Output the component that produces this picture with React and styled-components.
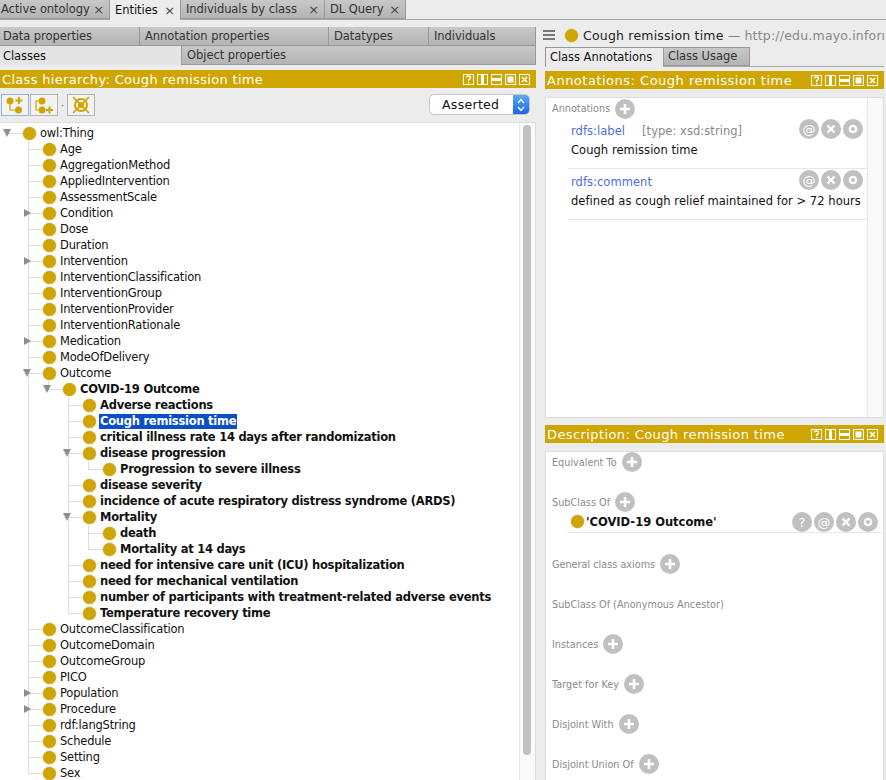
import React from "react";
import styled, { createGlobalStyle } from "styled-components";

const GOLD = "#cfa600";
const FONT = `"DejaVu Sans", "Liberation Sans", sans-serif`;

const topTabs = [
  { label: "Active ontology", width: 110 },
  { label: "Entities", width: 71, active: true },
  { label: "Individuals by class", width: 144 },
  { label: "DL Query", width: 81 },
];

const tree = {
  name: "owl:Thing",
  open: true,
  kids: [
    { name: "Age" },
    { name: "AggregationMethod" },
    { name: "AppliedIntervention" },
    { name: "AssessmentScale" },
    { name: "Condition", closed: true },
    { name: "Dose" },
    { name: "Duration" },
    { name: "Intervention", closed: true },
    { name: "InterventionClassification" },
    { name: "InterventionGroup" },
    { name: "InterventionProvider" },
    { name: "InterventionRationale" },
    { name: "Medication", closed: true },
    { name: "ModeOfDelivery" },
    {
      name: "Outcome",
      open: true,
      kids: [
        {
          name: "COVID-19 Outcome",
          bold: true,
          open: true,
          kids: [
            { name: "Adverse reactions", bold: true },
            { name: "Cough remission time", bold: true, selected: true },
            { name: "critical illness rate 14 days after randomization", bold: true },
            {
              name: "disease progression",
              bold: true,
              open: true,
              kids: [{ name: "Progression to severe illness", bold: true }],
            },
            { name: "disease severity", bold: true },
            { name: "incidence of acute respiratory distress syndrome (ARDS)", bold: true },
            {
              name: "Mortality",
              bold: true,
              open: true,
              kids: [
                { name: "death", bold: true },
                { name: "Mortality at 14 days", bold: true },
              ],
            },
            { name: "need for intensive care unit (ICU) hospitalization", bold: true },
            { name: "need for mechanical ventilation", bold: true },
            { name: "number of participants with treatment-related adverse events", bold: true },
            { name: "Temperature recovery time", bold: true },
          ],
        },
      ],
    },
    { name: "OutcomeClassification" },
    { name: "OutcomeDomain" },
    { name: "OutcomeGroup" },
    { name: "PICO" },
    { name: "Population", closed: true },
    { name: "Procedure", closed: true },
    { name: "rdf:langString" },
    { name: "Schedule" },
    { name: "Setting" },
    { name: "Sex" },
  ],
};

const GlobalStyle = createGlobalStyle`
  html, body {
    margin: 0;
    padding: 0;
    background: #ececec;
    overflow: hidden;
  }
`;

function PaneControls() {
  return (
    <Controls>
      <Ctl viewBox="0 0 11 11">
        <rect x="0.5" y="0.5" width="10" height="10" fill="none" stroke="#fff" />
        <path d="M3.5 3.5 Q3.5 2 5.5 2 Q7.5 2 7.5 3.7 Q7.5 4.8 5.6 5.6 V7" fill="none" stroke="#fff" strokeWidth="1.3" />
        <rect x="5" y="8" width="1.4" height="1.4" fill="#fff" />
      </Ctl>
      <Ctl viewBox="0 0 11 11">
        <rect x="0.5" y="0.5" width="10" height="10" fill="none" stroke="#fff" />
        <rect x="4" y="0" width="3" height="11" fill="#fff" />
      </Ctl>
      <Ctl viewBox="0 0 11 11">
        <rect x="0.5" y="0.5" width="10" height="10" fill="none" stroke="#fff" />
        <rect x="0" y="4" width="11" height="3" fill="#fff" />
      </Ctl>
      <Ctl viewBox="0 0 11 11">
        <rect x="0.5" y="0.5" width="10" height="10" fill="none" stroke="#fff" />
        <rect x="2.5" y="2.5" width="6" height="6" fill="#fff" />
      </Ctl>
      <Ctl viewBox="0 0 11 11">
        <rect x="0.5" y="0.5" width="10" height="10" fill="none" stroke="#fff" />
        <path d="M3 3 L8 8 M8 3 L3 8" stroke="#fff" strokeWidth="1.6" />
      </Ctl>
    </Controls>
  );
}

function PlusButton() {
  return (
    <Round>
      <svg width="12" height="12" viewBox="0 0 12 12">
        <path d="M6 1 V11 M1 6 H11" stroke="#fff" strokeWidth="2.6" />
      </svg>
    </Round>
  );
}

function RowActions({ help }) {
  return (
    <Actions>
      {help && <Round>?</Round>}
      <Round>@</Round>
      <Round>
        <svg width="10" height="10" viewBox="0 0 10 10">
          <path d="M1.5 1.5 L8.5 8.5 M8.5 1.5 L1.5 8.5" stroke="#fff" strokeWidth="2.4" />
        </svg>
      </Round>
      <Round>
        <svg width="10" height="10" viewBox="0 0 10 10">
          <circle cx="5" cy="5" r="3.2" fill="none" stroke="#fff" strokeWidth="2.2" />
        </svg>
      </Round>
    </Actions>
  );
}

function TreeItem({ node }) {
  return (
    <Item>
      <Row>
        {node.open && <Toggle $open />}
        {node.closed && <Toggle />}
        <Dash />
        <Ball />
        <Name $bold={node.bold} $selected={node.selected}>
          {node.name}
        </Name>
      </Row>
      {node.kids && (
        <Kids>
          {node.kids.map((k) => (
            <TreeItem key={k.name} node={k} />
          ))}
        </Kids>
      )}
    </Item>
  );
}

export default function App() {
  return (
    <>
      <GlobalStyle />
      <Page>
        <TopBar>
          {topTabs.map((t) => (
            <TopTab key={t.label} $w={t.width} $active={t.active}>
              <span>{t.label}</span>
              <Close>×</Close>
            </TopTab>
          ))}
        </TopBar>
        <Main>
          <Left>
            <SubRow>
              <SubTab $w={140}>Data properties</SubTab>
              <SubTab $w={189}>Annotation properties</SubTab>
              <SubTab $w={100}>Datatypes</SubTab>
              <SubTab $w={107}>Individuals</SubTab>
            </SubRow>
            <SubRow>
              <SubTab $w={182} $active>
                Classes
              </SubTab>
              <SubTab $w={354}>Object properties</SubTab>
            </SubRow>
            <Header $spacing={0.32}>
              <span>Class hierarchy: Cough remission time</span>
              <PaneControls />
            </Header>
            <Toolbar>
              <ToolButton $focus>
                <svg width="20" height="18" viewBox="0 0 20 18">
                  <circle cx="5" cy="5" r="3.5" fill={GOLD} />
                  <circle cx="13.5" cy="14" r="3.5" fill={GOLD} />
                  <path d="M5 8 V14 H10" fill="none" stroke={GOLD} strokeWidth="1.2" />
                  <path d="M14 1 V8 M10.5 4.5 H17.5" stroke={GOLD} strokeWidth="2" />
                </svg>
              </ToolButton>
              <ToolButton>
                <svg width="20" height="18" viewBox="0 0 20 18">
                  <circle cx="8" cy="5" r="3.5" fill={GOLD} />
                  <circle cx="8" cy="14" r="3.5" fill={GOLD} />
                  <path d="M4.5 5 H2 V14 H4.5" fill="none" stroke={GOLD} strokeWidth="1.2" />
                  <path d="M15.5 10.5 V17.5 M12 14 H19" stroke={GOLD} strokeWidth="2" />
                </svg>
              </ToolButton>
              <Dot>·</Dot>
              <ToolButton>
                <svg width="20" height="18" viewBox="0 0 20 18">
                  <circle cx="10" cy="9" r="6" fill="none" stroke={GOLD} strokeWidth="2" />
                  <circle cx="10" cy="9" r="3" fill={GOLD} />
                  <path d="M2 1 L18 17 M18 1 L2 17" stroke={GOLD} strokeWidth="1.6" />
                </svg>
              </ToolButton>
              <Select>
                <SelectText>Asserted</SelectText>
                <Stepper>
                  <svg width="8" height="16" viewBox="0 0 8 16">
                    <path d="M1 6 L4 2.5 L7 6 M1 10 L4 13.5 L7 10" fill="none" stroke="#fff" strokeWidth="1.4" />
                  </svg>
                </Stepper>
              </Select>
            </Toolbar>
            <TreeBox>
              <TreeScroll>
                <Root>
                  <TreeItem node={tree} />
                </Root>
              </TreeScroll>
              <Track>
                <Thumb />
              </Track>
            </TreeBox>
          </Left>
          <Right>
            <EntityBar>
              <Burger>
                <i />
                <i />
                <i />
              </Burger>
              <Ball />
              <EntityName>Cough remission time</EntityName>
              <EntityIri>— http://edu.mayo.informatics.owl</EntityIri>
            </EntityBar>
            <RightTabs>
              <RightTab $active>Class Annotations</RightTab>
              <RightTab>Class Usage</RightTab>
            </RightTabs>
            <Header $top={4} $spacing={0.5}>
              <span>Annotations: Cough remission time</span>
              <PaneControls />
            </Header>
            <AnnotationBox>
              <AnnotationList>
                <SectionLabel>
                  <Caption>Annotations</Caption>
                  <PlusButton />
                </SectionLabel>
                <Annotation>
                  <PropLine>
                    <Prop>rdfs:label</Prop>
                    <PropType>[type: xsd:string]</PropType>
                  </PropLine>
                  <RowActions />
                  <Value>Cough remission time</Value>
                </Annotation>
                <Annotation>
                  <PropLine>
                    <Prop>rdfs:comment</Prop>
                  </PropLine>
                  <RowActions />
                  <Value>defined as cough relief maintained for &gt; 72 hours</Value>
                </Annotation>
              </AnnotationList>
              <SideTrack />
            </AnnotationBox>
            <Header $top={7} $spacing={0.4}>
              <span>Description: Cough remission time</span>
              <PaneControls />
            </Header>
            <DescriptionBox>
              <Section>
                <Caption>Equivalent To</Caption>
                <PlusButton />
              </Section>
              <Section $short>
                <Caption>SubClass Of</Caption>
                <PlusButton />
              </Section>
              <Frame>
                <Ball />
                <FrameName>'COVID-19 Outcome'</FrameName>
                <RowActions help />
              </Frame>
              <Section>
                <Caption>General class axioms</Caption>
                <PlusButton />
              </Section>
              <Section>
                <Caption>SubClass Of (Anonymous Ancestor)</Caption>
              </Section>
              <Section>
                <Caption>Instances</Caption>
                <PlusButton />
              </Section>
              <Section>
                <Caption>Target for Key</Caption>
                <PlusButton />
              </Section>
              <Section>
                <Caption>Disjoint With</Caption>
                <PlusButton />
              </Section>
              <Section>
                <Caption>Disjoint Union Of</Caption>
                <PlusButton />
              </Section>
            </DescriptionBox>
          </Right>
        </Main>
      </Page>
    </>
  );
}

const Page = styled.div`
  width: 886px;
  height: 780px;
  overflow: hidden;
  background: #ececec;
  font-family: ${FONT};
  font-size: 11.5px;
  color: #111;
`;

const TopBar = styled.div`
  height: 19px;
  display: flex;
  border-bottom: 1px solid #a8a8a8;
`;

const TopTab = styled.div`
  width: ${(p) => p.$w}px;
  height: ${(p) => (p.$active ? 20 : 19)}px;
  box-sizing: border-box;
  flex: none;
  display: flex;
  align-items: center;
  justify-content: space-between;
  padding: 0 5px 0 5px;
  font-size: 11.5px;
  letter-spacing: -0.05px;
  white-space: nowrap;
  color: ${(p) => (p.$active ? "#111" : "#333")};
  background: ${(p) =>
    p.$active ? "#ececec" : "linear-gradient(#c8c8c8, #b4b4b4)"};
  border-right: 1px solid #999;
  border-bottom: ${(p) => (p.$active ? "none" : "1px solid #999")};
  &:first-child {
    padding-left: 1px;
  }
`;

const Close = styled.span`
  font-size: 13px;
  color: #444;
`;

const Main = styled.div`
  display: flex;
  gap: 9px;
  padding-top: 7px;
`;

const Left = styled.div`
  width: 536px;
  flex: none;
  display: flex;
  flex-direction: column;
`;

const SubRow = styled.div`
  display: flex;
  height: 19px;
`;

const SubTab = styled.div`
  width: ${(p) => p.$w}px;
  box-sizing: border-box;
  padding: 0 4px 0 5px;
  display: flex;
  align-items: center;
  font-size: 11.5px;
  letter-spacing: -0.05px;
  color: ${(p) => (p.$active ? "#111" : "#333")};
  background: ${(p) =>
    p.$active ? "#e4e4e4" : "linear-gradient(#c8c8c8, #b4b4b4)"};
  border-right: 1px solid #999;
  border-bottom: ${(p) => (p.$active ? "none" : "1px solid #999")};
  &:first-child {
    padding-left: 3px;
  }
`;

const Header = styled.div`
  height: 18px;
  flex: none;
  margin-top: ${(p) => p.$top ?? 5}px;
  display: flex;
  align-items: center;
  justify-content: space-between;
  padding: 0 6px 0 2px;
  background: ${GOLD};
  color: #fff;
  font-size: 13px;
  letter-spacing: ${(p) => p.$spacing}px;
  white-space: nowrap;
`;

const Controls = styled.div`
  display: flex;
  gap: 3px;
`;

const Ctl = styled.svg`
  width: 11px;
  height: 11px;
  display: block;
`;

const Toolbar = styled.div`
  height: 34px;
  display: flex;
  align-items: center;
  padding: 0 6px 0 1px;
  gap: 1px;
  box-sizing: border-box;
`;

const ToolButton = styled.div`
  width: 28px;
  height: 22px;
  box-sizing: border-box;
  display: flex;
  align-items: center;
  justify-content: center;
  background: #f3f3f3;
  border: 1px solid ${(p) => (p.$focus ? "#8fb4dd" : "#b4b4b4")};
`;

const Dot = styled.span`
  width: 7px;
  text-align: center;
  color: #666;
  font-size: 11px;
`;

const Select = styled.div`
  margin: 0 0 1px auto;
  width: 101px;
  height: 21px;
  box-sizing: border-box;
  display: flex;
  background: #fff;
  border: 1px solid #c6c6c6;
  border-radius: 5px;
  overflow: hidden;
`;

const SelectText = styled.div`
  flex: 1;
  padding-left: 12px;
  font-size: 12.5px;
  line-height: 19px;
  letter-spacing: 0.3px;
`;

const Stepper = styled.div`
  width: 16px;
  display: flex;
  align-items: center;
  justify-content: center;
  background: linear-gradient(#5fa8f8, #1668e4);
`;

const TreeBox = styled.div`
  height: 658px;
  display: flex;
  background: #fff;
  border-top: 1px solid #ddd;
  border-right: 1px solid #ddd;
  overflow: hidden;
`;

const TreeScroll = styled.div`
  flex: 1;
  padding-top: 1px;
  overflow: hidden;
`;

const Track = styled.div`
  width: 16px;
  flex: none;
  box-sizing: border-box;
  padding: 2px 3px 0 3px;
  background: #fafafa;
  border-left: 1px solid #e8e8e8;
`;

const Thumb = styled.div`
  height: 630px;
  width: 8px;
  border-radius: 4px;
  background: #c1c1c1;
`;

const Root = styled.ul`
  list-style: none;
  margin: 0;
  padding: 1px 0 0 8px;
`;

const Kids = styled.ul`
  list-style: none;
  margin: 0;
  padding: 0 0 0 20px;
`;

const Item = styled.li`
  position: relative;
  ${Kids} > &::before {
    content: "";
    position: absolute;
    left: 0;
    top: 0;
    bottom: 0;
    width: 1px;
    background: #dcdcdc;
  }
  ${Kids} > &:last-child::before {
    bottom: auto;
    height: 8px;
  }
`;

const Row = styled.div`
  position: relative;
  height: 16px;
  display: flex;
  align-items: center;
`;

const Toggle = styled.span`
  position: absolute;
  width: 0;
  height: 0;
  ${(p) =>
    p.$open
      ? `border-left: 4.5px solid transparent;
         border-right: 4.5px solid transparent;
         border-top: 8px solid #8e8e8e;
         left: -5px;
         top: 4px;`
      : `border-top: 4.5px solid transparent;
         border-bottom: 4.5px solid transparent;
         border-left: 7px solid #8e8e8e;
         left: -4px;
         top: 4px;`}
`;

const Dash = styled.span`
  width: 15px;
  height: 1px;
  flex: none;
  background: #dcdcdc;
`;

const Ball = styled.span`
  width: 13px;
  height: 13px;
  flex: none;
  box-sizing: border-box;
  border-radius: 50%;
  background: ${GOLD};
  box-shadow: 0 0 0 0.5px #d8d0b0;
`;

const Name = styled.span`
  margin-left: 3px;
  padding: 0 1px;
  height: 15px;
  line-height: 15px;
  white-space: nowrap;
  font-size: 11.5px;
  letter-spacing: ${(p) => (p.$bold ? "-0.25px" : "-0.2px")};
  font-weight: ${(p) => (p.$bold ? 700 : 400)};
  color: ${(p) => (p.$selected ? "#fff" : "#111")};
  background: ${(p) => (p.$selected ? "#0a4fc4" : "transparent")};
`;

const Right = styled.div`
  width: 339px;
  flex: none;
  display: flex;
  flex-direction: column;
`;

const EntityBar = styled.div`
  height: 20px;
  box-sizing: border-box;
  padding-bottom: 4px;
  margin-left: -2px;
  display: flex;
  align-items: center;
  white-space: nowrap;
  overflow: hidden;
  font-size: 12.5px;
  letter-spacing: 0.2px;
`;

const Burger = styled.div`
  width: 12px;
  margin-right: 10px;
  flex: none;
  display: flex;
  flex-direction: column;
  gap: 2px;
  i {
    display: block;
    height: 2px;
    background: #777;
  }
`;

const EntityName = styled.span`
  margin-left: 5px;
  color: #222;
`;

const EntityIri = styled.span`
  margin-left: 4px;
  color: #888;
`;

const RightTabs = styled.div`
  display: flex;
  height: 19px;
  border-bottom: 1px solid #a8a8a8;
`;

const RightTab = styled.div`
  box-sizing: border-box;
  width: ${(p) => (p.$active ? 118 : 87)}px;
  height: ${(p) => (p.$active ? 20 : 19)}px;
  display: flex;
  align-items: center;
  padding: 0 4px 1px;
  white-space: nowrap;
  font-size: 11.5px;
  letter-spacing: -0.05px;
  color: ${(p) => (p.$active ? "#111" : "#333")};
  background: ${(p) =>
    p.$active ? "#ececec" : "linear-gradient(#c8c8c8, #b4b4b4)"};
  border: 1px solid #999;
  border-bottom: ${(p) => (p.$active ? "none" : "1px solid #999")};
  border-right: ${(p) => (p.$active ? "none" : "1px solid #999")};
`;

const AnnotationBox = styled.div`
  margin-top: 8px;
  height: 321px;
  display: flex;
  background: #fff;
  border: 1px solid #ddd;
  box-sizing: border-box;
`;

const AnnotationList = styled.div`
  flex: 1;
  padding-top: 1px;
`;

const SideTrack = styled.div`
  width: 15px;
  flex: none;
  background: #fafafa;
  border-left: 1px solid #e6e6e6;
`;

const SectionLabel = styled.div`
  height: 19px;
  display: flex;
  align-items: center;
  gap: 5px;
  padding-left: 6px;
`;

const Caption = styled.span`
  font-size: 9.7px;
  color: #8a8a8a;
  white-space: nowrap;
`;

const Round = styled.span`
  width: 20px;
  height: 20px;
  flex: none;
  border-radius: 50%;
  background: #c0c0c0;
  color: #fff;
  font-size: 13px;
  display: inline-flex;
  align-items: center;
  justify-content: center;
`;

const Annotation = styled.div`
  position: relative;
  margin-left: 22px;
  height: 51px;
  box-sizing: border-box;
  padding-left: 3px;
  border-bottom: 1px solid #e6e6e6;
  white-space: nowrap;
  letter-spacing: 0.05px;
`;

const PropLine = styled.div`
  display: flex;
  gap: 17px;
  height: 19px;
  padding-top: 3px;
  align-items: center;
`;

const Prop = styled.span`
  color: #4a6fd8;
`;

const PropType = styled.span`
  color: #888;
`;

const Value = styled.div`
  margin-top: 1px;
  height: 18px;
  line-height: 18px;
`;

const Actions = styled.div`
  position: absolute;
  right: 4px;
  top: 1px;
  display: flex;
  gap: 2px;
`;

const DescriptionBox = styled.div`
  margin-top: 8px;
  height: 340px;
  box-sizing: border-box;
  background: #fff;
  border: 1px solid #ddd;
`;

const Section = styled.div`
  height: ${(p) => (p.$short ? 19 : 40)}px;
  display: flex;
  align-items: flex-start;
  gap: 5px;
  padding-left: 6px;
  ${Caption} {
    margin-top: 5px;
  }
`;

const Frame = styled.div`
  position: relative;
  height: 21px;
  margin: 0 1px 21px 21px;
  padding-left: 4px;
  display: flex;
  align-items: center;
  border-bottom: 1px solid #e6e6e6;
  ${Actions} {
    right: 4px;
    top: 1px;
  }
`;

const FrameName = styled.span`
  font-weight: 700;
  margin-left: 2px;
`;
